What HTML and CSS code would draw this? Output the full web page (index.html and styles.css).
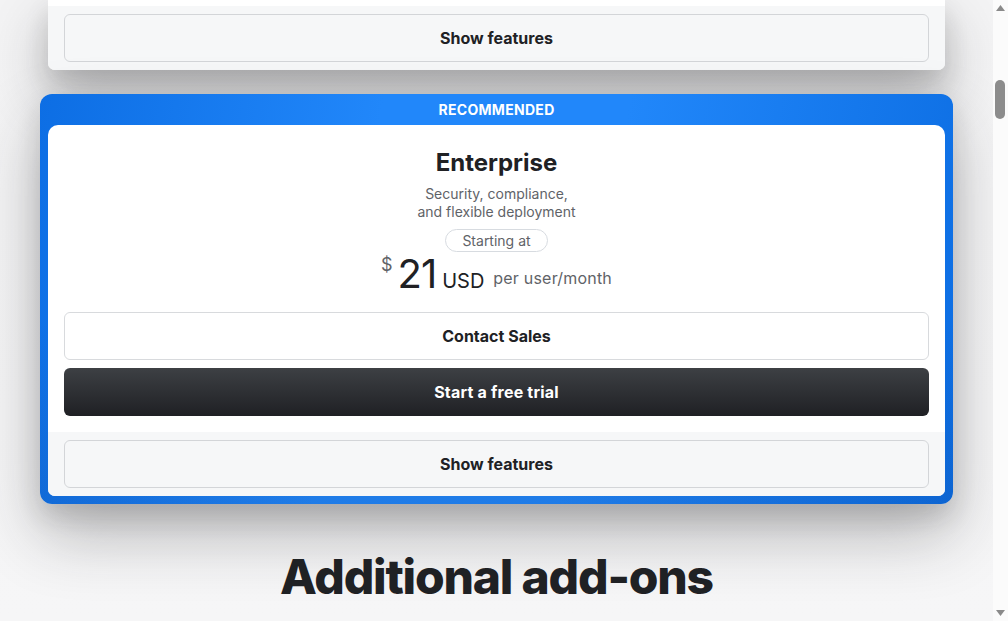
FILE: index.html
```html
<!DOCTYPE html>
<html lang="en">
<head>
<meta charset="utf-8">
<title>Plans</title>
<link rel="stylesheet" href="styles.css">
</head>
<body>
<div class="window">
<div class="viewport">
<main class="page">
  <section class="plans">
    <article class="card card-plain">
      <div class="card-body card-body-tail"></div>
      <div class="card-footer">
        <button class="btn btn-ghost">Show features</button>
      </div>
    </article>

    <article class="featured">
      <div class="featured-label">RECOMMENDED</div>
      <div class="card card-inner">
        <div class="card-body">
          <h2 class="plan-name">Enterprise</h2>
          <p class="plan-desc">Security, compliance,<br>and flexible deployment</p>
          <span class="pill">Starting at</span>
          <div class="price">
            <span class="currency">$</span>
            <span class="amount">21</span>
            <span class="unit">USD</span>
            <span class="period">per user/month</span>
          </div>
          <div class="actions">
            <button class="btn btn-outline">Contact Sales</button>
            <button class="btn btn-dark">Start a free trial</button>
          </div>
        </div>
        <div class="card-footer">
          <button class="btn btn-ghost">Show features</button>
        </div>
      </div>
    </article>
  </section>

  <section class="addons">
    <h2 class="addons-title">Additional add-ons</h2>
  </section>
</main>
</div>
<div class="scrollbar" aria-hidden="true">
  <svg class="sb-arrow" width="15" height="14" viewBox="0 0 15 14"><path d="M3 11 L7.5 5 L12 11 Z" fill="#8a8a8a"/></svg>
  <div class="sb-track"><div class="sb-thumb"></div></div>
  <svg class="sb-arrow" width="15" height="14" viewBox="0 0 15 14"><path d="M3 3 L12 3 L7.5 9 Z" fill="#8a8a8a"/></svg>
</div>
</div>
</body>
</html>
```

FILE: styles.css
```css
* { box-sizing: border-box; }

html, body {
  margin: 0;
  padding: 0;
  height: 100%;
  overflow: hidden;
}

body {
  background: #f8f9fa;
  font-family: "Inter", "Roboto", "Liberation Sans", sans-serif;
  color: #202124;
}

.window {
  display: flex;
  height: 100%;
}

.viewport {
  flex: 1;
  min-width: 0;
  height: 100%;
  overflow: hidden;
  background: linear-gradient(180deg, #f3f3f4 0%, #f6f6f7 100%);
}

.scrollbar {
  width: 15px;
  flex: none;
  background: #fbfbfb;
  display: flex;
  flex-direction: column;
}

.sb-arrow {
  display: block;
  flex: none;
}

.sb-track {
  flex: 1;
  padding: 66px 3px 0 2px;
}

.sb-thumb {
  width: 10px;
  height: 39px;
  border-radius: 5px;
  background: #8c8c8c;
}

.page {
  display: flex;
  flex-direction: column;
  align-items: center;
}

.plans {
  display: flex;
  flex-direction: column;
  align-items: center;
  gap: 24px;
}

.card {
  background: #fff;
  width: 897px;
  display: flex;
  flex-direction: column;
  overflow: hidden;
}

.card-plain {
  border-radius: 0 0 7px 7px;
  box-shadow: 0 12px 24px rgba(32, 33, 36, 0.14), 0 26px 56px rgba(32, 33, 36, 0.3);
}

.card-body-tail {
  height: 6px;
}

.card-body {
  display: flex;
  flex-direction: column;
  align-items: center;
  padding: 0 16px;
}

.card-footer {
  background: #f6f7f8;
  padding: 8px 16px;
}

.btn {
  display: flex;
  align-items: center;
  justify-content: center;
  width: 100%;
  height: 48px;
  border-radius: 6px;
  font-family: inherit;
  font-size: 16px;
  font-weight: 700;
  letter-spacing: 0;
  cursor: pointer;
}

.btn-ghost {
  background: #f6f7f8;
  border: 1px solid #d3d5d8;
  color: #202124;
}

.btn-outline {
  background: #fff;
  border: 1px solid #d8dadd;
  color: #202124;
}

.btn-dark {
  background: linear-gradient(180deg, #3d4044 0%, #1f2024 100%);
  border: none;
  color: #fff;
  letter-spacing: 0.2px;
}

.featured {
  width: 913px;
  border-radius: 12px;
  padding: 0 8px 8px;
  background:
    linear-gradient(180deg, rgba(0, 0, 0, 0) 0%, rgba(0, 0, 0, 0) 55%, rgba(20, 40, 90, 0.12) 100%),
    linear-gradient(100deg, #0d6ee4 0%, #2187fa 35%, #2187fa 60%, #0c6de2 100%);
  box-shadow: 0 12px 24px rgba(32, 33, 36, 0.14), 0 30px 64px rgba(32, 33, 36, 0.3);
  display: flex;
  flex-direction: column;
}

.featured-label {
  height: 31px;
  display: flex;
  align-items: center;
  justify-content: center;
  color: #fff;
  font-size: 14px;
  font-weight: 700;
  letter-spacing: 0.3px;
}

.card-inner {
  border-radius: 10px 10px 7px 7px;
}

.plan-name {
  margin: 24px 0 0;
  font-size: 24px;
  line-height: 28px;
  font-weight: 700;
  letter-spacing: 0;
}

.plan-desc {
  margin: 8px 0 0;
  font-size: 14px;
  line-height: 18px;
  color: #5f6368;
  text-align: center;
}

.pill {
  margin-top: 8px;
  height: 23px;
  padding: 0 16px;
  border: 1px solid #d7dbe0;
  border-radius: 12px;
  display: flex;
  align-items: center;
  font-size: 14px;
  color: #5f6368;
}

.price {
  display: flex;
  align-items: baseline;
  margin-top: 0;
  height: 44px;
  line-height: 44px;
}

.currency {
  align-self: flex-start;
  font-size: 18px;
  line-height: 26px;
  color: #5f6368;
  margin-right: 5px;
}

.amount {
  font-size: 40px;
  font-weight: 400;
  letter-spacing: -1px;
  color: #202124;
}

.unit {
  font-size: 20px;
  margin-left: 6px;
  color: #202124;
}

.period {
  font-size: 16px;
  letter-spacing: 0.2px;
  color: #5f6368;
  margin-left: 9px;
  transform: translateY(-4px);
}

.actions {
  width: 100%;
  display: flex;
  flex-direction: column;
  gap: 8px;
  margin-top: 16px;
  padding-bottom: 16px;
}

.addons {
  display: flex;
  flex-direction: column;
  align-items: center;
  margin-top: 45px;
  padding-bottom: 80px;
}

.addons-title {
  margin: 0;
  font-size: 48px;
  line-height: 56px;
  font-weight: 800;
  letter-spacing: -1.2px;
  color: #1f2124;
}
```
